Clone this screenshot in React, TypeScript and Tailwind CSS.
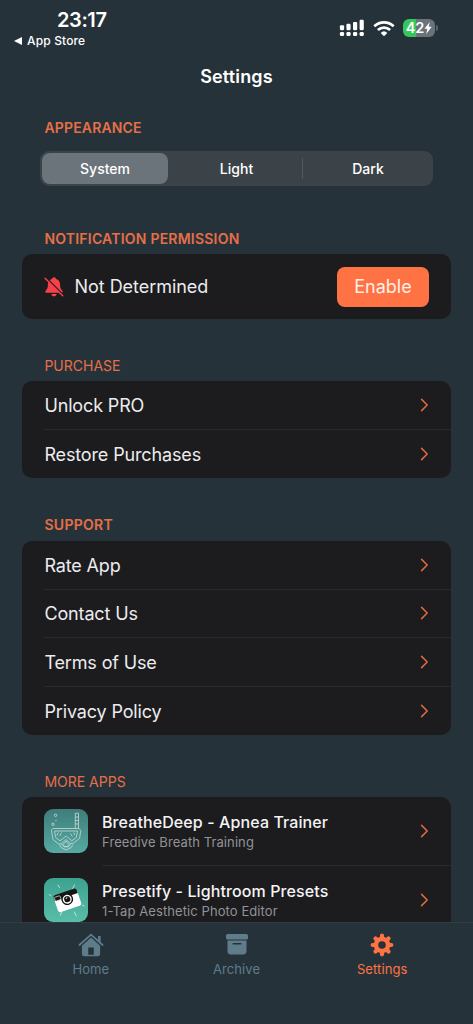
import type { ReactNode } from "react";

type Tab = {
  label: string;
  icon: ReactNode;
  active?: boolean;
};

type MoreApp = {
  name: string;
  subtitle: string;
  icon: ReactNode;
};

const Chevron = () => (
  <svg width="9" height="14" viewBox="0 0 9 14" fill="none" className="shrink-0">
    <path d="M1.6 1.4 7.2 7l-5.6 5.6" stroke="#de6c40" strokeWidth="1.5" strokeLinecap="round" strokeLinejoin="round" />
  </svg>
);

const SignalIcon = () => (
  <svg width="26" height="18" viewBox="0 0 26 18" fill="#fff">
    <rect x="0.9" y="6.2" width="4.2" height="5" rx="1.1" />
    <rect x="7.4" y="4.8" width="4.2" height="6.4" rx="1.1" />
    <rect x="14" y="3" width="4.2" height="8.2" rx="1.1" />
    <rect x="20.6" y="0.8" width="4.2" height="10.4" rx="1.1" />
    <rect x="0.9" y="13" width="4.2" height="4" rx="1.3" />
    <rect x="7.4" y="13" width="4.2" height="4" rx="1.3" />
    <rect x="14" y="13" width="4.2" height="4" rx="1.3" />
    <rect x="20.6" y="13" width="4.2" height="4" rx="1.3" />
  </svg>
);

const WifiIcon = () => (
  <svg width="22" height="17" viewBox="0 0 22 17" fill="none" stroke="#fff" strokeWidth="2.7">
    <path d="M1.3 6.2a14 14 0 0 1 19.4 0" />
    <path d="M4.9 10a9 9 0 0 1 12.2 0" />
    <path d="M11 16.2 7.7 12.9a4.8 4.8 0 0 1 6.6 0z" fill="#fff" stroke="none" />
  </svg>
);

const Battery = () => (
  <div className="flex items-center">
    <div className="flex h-[18px] w-8 items-center justify-center rounded-[6px] bg-linear-to-r from-[#35c759] from-42% to-[#697379] to-42% text-white">
      <span className="text-[14.5px] leading-none font-semibold">42</span>
      <svg width="8" height="12" viewBox="0 0 8 12" fill="#fff">
        <path d="M5.8 0 .4 6.8h2.9L2.2 12l5.5-7.2h-3z" />
      </svg>
    </div>
    <div className="ml-px h-[6px] w-[2px] rounded-r-full bg-[#59636a]" />
  </div>
);

const BellSlashIcon = () => (
  <svg width="20" height="20" viewBox="0 0 20 20">
    <path
      d="M10 .3c-1.2 0-2 .8-2.1 1.7C5.3 2.8 3.9 4.9 3.9 7.8c0 3.4-.9 4.5-2.2 5.900-.8.9-.4 2.100.8 2.100h15c1.200 0 1.600-1.200.8-2.100-1.300-1.400-2.200-2.500-2.200-5.900 0-2.900-1.400-5-4-5.800C12 1.100 11.200.3 10 .3z"
      fill="#f8404a"
    />
    <path d="M7.4 16.900h5.200c-.2 1.500-1.200 2.400-2.600 2.400s-2.400-.9-2.600-2.400z" fill="#f8404a" />
    <path d="M2.400 1 19.400 18" stroke="#1c1c1e" strokeWidth="1.5" />
    <path d="M1.100 1.200 18.700 18.800" stroke="#f8404a" strokeWidth="1.5" strokeLinecap="round" />
  </svg>
);

const HomeIcon = () => (
  <svg width="26" height="24" viewBox="0 0 26 24" fill="currentColor">
    <path d="M1.4 12 13 1.600 24.600 12" fill="none" stroke="currentColor" strokeWidth="1.7" strokeLinecap="round" strokeLinejoin="round" />
    <path d="M20 3h2.600v6.200L20 6.900z" />
    <path
      fillRule="evenodd"
      d="M13 4.600 3.900 12.800v8.300c0 1.300.8 2.100 2.100 2.100h14c1.300 0 2.100-.8 2.100-2.100v-8.300zM10.200 14.600h5.600v7.200h-5.600z"
    />
  </svg>
);

const ArchiveIcon = () => (
  <svg width="22" height="21" viewBox="0 0 22 21" fill="currentColor">
    <rect x="0" y="0" width="22" height="5.4" rx="1.5" />
    <path
      fillRule="evenodd"
      d="M1.500 6.600h19v10.700c0 2-1.200 3.200-3.200 3.200H4.700c-2 0-3.200-1.200-3.200-3.200zM7.300 8.900a.8.8 0 0 0 0 1.700h7.400a.8.8 0 0 0 0-1.700z"
    />
  </svg>
);

const GearIcon = () => (
  <svg width="24" height="24" viewBox="0 0 24 24">
    <g stroke="currentColor" strokeWidth="4.2" strokeLinecap="round">
      <path d="M12 2.700v18.600M2.700 12h18.600M5.500 5.500l13 13M18.500 5.500l-13 13" />
    </g>
    <circle cx="12" cy="12" r="8.3" fill="currentColor" />
    <circle cx="12" cy="12" r="3.8" fill="#26323a" />
  </svg>
);

const MaskArt = () => (
  <svg width="44" height="44" viewBox="0 0 44 44" fill="none" stroke="#c9dad7" strokeWidth="0.8">
    <circle cx="11.6" cy="6.3" r="1.2" />
    <circle cx="9" cy="15.3" r="1.2" />
    <circle cx="12" cy="11.5" r="0.3" />
    <path d="M31.300 19.500V4.300h3.200v15.200M31.300 8h3.200M31.300 11.500h3.200M31.300 15h3.200" />
    <path d="M9 19.500h26l1.800 2-1.300 8-6.500 4.800h-3L22 30.500l-4.500 4.300h-3l-5.500-4.300L7.300 21z" />
    <path d="M10.500 22h23l-1.200 6.500-4.500 3.300L22.200 27 16 31.800l-4.300-3.300z" />
    <path d="m15.800 27 1.700-3.500M12.800 26.500l1.500-3M26.500 24.500l1.800 3M29.500 23.500l1.500 2.500" />
    <path d="m17.500 34.800 2.500 3h4.500l2.500-3M19 35.500l3-3.500 3 3.500-1.500 2h-3z" />
    <path d="m15.500 35.500 1.700 3 5 2.500 5-2.500 1.700-3" />
  </svg>
);

const CameraArt = () => (
  <svg width="44" height="44" viewBox="0 0 44 44" fill="none">
    <g transform="rotate(-19 23 22)">
      <rect x="11" y="14" width="24.5" height="17.5" rx="2.5" fill="#fff" />
      <path d="M11 18.800v-2.600c0-1.700.8-2.700 2.500-2.700H33c1.700 0 2.500 1 2.500 2.700v2.600z" fill="#161616" />
      <rect x="11.7" y="15.5" width="6" height="4" rx="1" fill="#161616" stroke="#ddd" strokeWidth="0.7" />
      <circle cx="23.5" cy="21.3" r="5.9" fill="#161616" />
      <circle cx="23.5" cy="21.3" r="4.5" fill="#fff" />
      <circle cx="23.5" cy="21.3" r="3.1" fill="#161616" />
      <path d="M22.600 20.600c.3-.8.900-1.100 1.700-1.100" stroke="#fff" strokeWidth="0.9" />
    </g>
    <path
      d="m14 7 1.500 2.500M30.500 7l-1.800 3.500M5.200 16.800l1.500.6M38.500 27.300l1.500.5M30.500 34l1.800 4M18 33.500l-1.600 3.700"
      stroke="#c5e8df"
      strokeWidth="0.9"
      strokeLinecap="round"
    />
  </svg>
);

const SectionTitle = ({ children, className }: { children: ReactNode; className: string }) => (
  <h2 className={`ml-[22px] h-5 pl-[0.4px] text-sm whitespace-nowrap text-[#e66f47] ${className}`}>{children}</h2>
);

const LinkList = ({ items }: { items: string[] }) => (
  <ul className="mt-1.5 rounded-[10px] bg-[#1c1c1e] pl-[22px]">
    {items.map((item) => (
      <li
        key={item}
        className="flex h-[48.5px] items-center justify-between border-b border-[#29292c] pr-[22px] last:border-b-0"
      >
        <span className="pt-px pl-[0.4px] text-[18px] tracking-[-0.14px] text-[#ececee]">{item}</span>
        <Chevron />
      </li>
    ))}
  </ul>
);

const moreApps: MoreApp[] = [
  {
    name: "BreatheDeep - Apnea Trainer",
    subtitle: "Freedive Breath Training",
    icon: (
      <div className="mb-[2px] size-11 shrink-0 overflow-hidden rounded-[9px] bg-linear-to-b from-[#3f7d7b] to-[#55aaa3]">
        <MaskArt />
      </div>
    ),
  },
  {
    name: "Presetify - Lightroom Presets",
    subtitle: "1-Tap Aesthetic Photo Editor",
    icon: (
      <div className="mb-[2px] size-11 shrink-0 overflow-hidden rounded-[9px] bg-linear-to-b from-[#3ca28f] to-[#59bda9]">
        <CameraArt />
      </div>
    ),
  },
];

const tabs: Tab[] = [
  { label: "Home", icon: <HomeIcon /> },
  { label: "Archive", icon: <ArchiveIcon /> },
  { label: "Settings", icon: <GearIcon />, active: true },
];

const App = () => {
  return (
    <div className="flex h-[1024px] w-[473px] flex-col overflow-hidden bg-[#26323a] font-['Inter','Liberation_Sans',sans-serif] text-white">
      <header className="flex h-[50px] shrink-0 justify-between">
        <div className="pt-[9px] pl-3.5">
          <div className="pl-[43px] text-[20px] leading-[22px] font-semibold tracking-[-0.4px]">23:17</div>
          <div className="mt-0.5 flex items-center gap-[5px] text-[12px] leading-4 font-medium tracking-[0.15px]">
            <svg width="8" height="8" viewBox="0 0 8 8" fill="#fff">
              <path d="M8 0v8L0 4z" />
            </svg>
            App Store
          </div>
        </div>
        <div className="flex h-14 items-center gap-2 pr-[35px]">
          <SignalIcon />
          <WifiIcon />
          <Battery />
        </div>
      </header>

      <h1 className="h-[68px] shrink-0 pt-[15px] text-center text-[18px] leading-6 font-semibold tracking-[0.15px]">
        Settings
      </h1>

      <main className="min-h-0 flex-1 overflow-hidden px-[22px]">
        <section>
          <SectionTitle className="leading-5 font-semibold tracking-[0.17px]">APPEARANCE</SectionTitle>
          <div className="mx-[18px] mt-[13px] flex h-[35px] items-center rounded-[9px] bg-[#3b4348] p-[2px] text-sm font-medium">
            <div className="mr-[3px] flex h-full w-[126px] items-center justify-center rounded-[8px] bg-[#6b747a]">
              System
            </div>
            <div className="w-[131px] text-center">Light</div>
            <div className="h-[21px] w-px bg-[#525a5f]" />
            <div className="flex-1 pl-0.5 text-center">Dark</div>
          </div>
        </section>

        <section className="mt-[43px]">
          <SectionTitle className="leading-5 font-semibold tracking-[0.22px]">NOTIFICATION PERMISSION</SectionTitle>
          <div className="mt-[5px] flex h-[65px] items-center rounded-[10px] bg-[#1c1c1e] px-[22px]">
            <BellSlashIcon />
            <span className="ml-[10.5px] text-[18px] tracking-[-0.04px] text-[#ececee]">Not Determined</span>
            <button className="ml-auto h-10 w-[92px] rounded-[8px] bg-[#ff7244] text-[18px] text-[#fff0e8]">
              Enable
            </button>
          </div>
        </section>

        <section className="mt-9">
          <SectionTitle className="leading-[22px]">PURCHASE</SectionTitle>
          <LinkList items={["Unlock PRO", "Restore Purchases"]} />
        </section>

        <section className="mt-[37px]">
          <SectionTitle className="leading-5 font-semibold tracking-[0.3px]">SUPPORT</SectionTitle>
          <LinkList items={["Rate App", "Contact Us", "Terms of Use", "Privacy Policy"]} />
        </section>

        <section className="mt-9">
          <SectionTitle className="leading-[22px]">MORE APPS</SectionTitle>
          <ul className="mt-1.5 rounded-t-[10px] bg-[#1c1c1e] pl-[22px]">
            {moreApps.map((app) => (
              <li key={app.name} className="flex h-[69px] items-center gap-3.5">
                {app.icon}
                <div className="flex h-full flex-1 items-center justify-between border-b border-[#29292c] pr-[22px]">
                  <div className="pt-0.5">
                    <p className="text-base leading-5 font-medium tracking-[0.1px] text-[#f4f4f5]">{app.name}</p>
                    <p className="text-[13px] leading-5 tracking-[0.09px] text-[#929297]">{app.subtitle}</p>
                  </div>
                  <Chevron />
                </div>
              </li>
            ))}
          </ul>
        </section>
      </main>

      <nav className="flex h-[102px] shrink-0 justify-around border-t border-[#303d45] px-[18px] pt-2">
        {tabs.map((tab) => (
          <div
            key={tab.label}
            className={`flex flex-1 flex-col items-center text-[13px] leading-5 tracking-[0.1px] ${tab.active ? "text-[#ff7244]" : "text-[#5f7c8a]"}`}
          >
            <div className="flex h-7 items-center pb-px">{tab.icon}</div>
            {tab.label}
          </div>
        ))}
      </nav>
    </div>
  );
};

export default App;
